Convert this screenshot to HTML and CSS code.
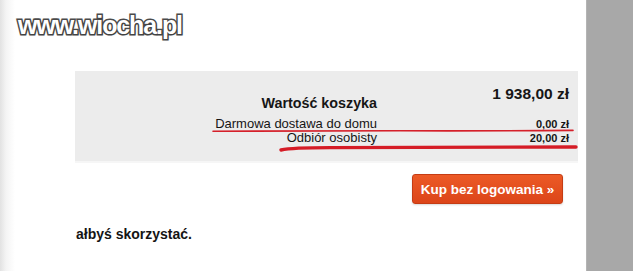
FILE: index.html
```html
<!DOCTYPE html>
<html lang="pl">
<head>
<meta charset="utf-8">
<title>Koszyk</title>
<link rel="stylesheet" href="styles.css">
</head>
<body>
<div class="main">
  <div class="logo"><span class="logo-text">www.wiocha.pl</span></div>
  <div class="panel">
    <div class="row-total">
      <span class="label label-total">Wartość koszyka</span>
      <span class="value value-total">1 938,00 zł</span>
    </div>
    <div class="row">
      <span class="label">Darmowa dostawa do domu</span>
      <span class="value">0,00 zł</span>
    </div>
    <div class="row">
      <span class="label">Odbiór osobisty</span>
      <span class="value">20,00 zł</span>
    </div>
  </div>
  <div class="actions">
    <button class="buy">Kup bez logowania »</button>
  </div>
  <p class="note">ałbyś skorzystać.</p>
  <svg class="marks" width="586" height="271" viewBox="0 0 586 271" aria-hidden="true">
    <path d="M213 131.2 Q 300 130.6 400 130.8 T 573 130.4" fill="none" stroke="#d5202a" stroke-width="1.6" stroke-linecap="round"/>
    <path d="M281 150 Q 292 147.6 330 147.6 L 576 147" fill="none" stroke="#d51c26" stroke-width="3.4" stroke-linecap="round"/>
  </svg>
</div>
<div class="sidebar"></div>
</body>
</html>
```
FILE: styles.css
```css
html, body {
  margin: 0;
  padding: 0;
}
body {
  width: 633px;
  height: 271px;
  overflow: hidden;
  background: #fff;
  font-family: "Liberation Sans", Arial, sans-serif;
  display: grid;
  grid-template-columns: 586px 47px;
}
.main {
  position: relative;
  background: linear-gradient(to right, #e2e2e2 0, #f4f4f4 6px, #fff 15px);
  height: 271px;
}
.sidebar {
  background: #a8a8a8;
  border-left: 1px solid #b4b4b4;
}
.logo {
  height: 71px;
  box-sizing: border-box;
  padding: 12px 0 0 18px;
  line-height: 26px;
}
.logo-text {
  font-family: "Liberation Sans", Arial, sans-serif;
  font-weight: bold;
  font-size: 25px;
  letter-spacing: -1.1px;
  color: #fff;
  -webkit-text-stroke: 3px #4b4b4b;
  paint-order: stroke fill;
  text-shadow: 1px 1px 2px rgba(0,0,0,0.18);
}
.panel {
  margin-left: 75px;
  width: 503px;
  height: 90px;
  background: #ececec;
  border-bottom: 2px solid #f6f6f6;
  box-sizing: content-box;
  color: #161616;
}
.row-total {
  display: grid;
  grid-template-columns: 302px 1fr;
  height: 46px;
  padding-right: 9px;
}
.row {
  display: grid;
  grid-template-columns: 302px 1fr;
  align-items: baseline;
  line-height: 14px;
  padding-right: 9px;
}
.label {
  text-align: right;
  font-size: 13px;
}
.value {
  text-align: right;
  font-size: 11px;
  font-weight: bold;
}
.label-total {
  align-self: end;
  font-size: 14.3px;
  font-weight: bold;
  line-height: 16px;
  margin-bottom: 6px;
}
.value-total {
  align-self: start;
  font-size: 15.5px;
  line-height: 18px;
  margin-top: 14px;
}
.actions {
  display: flex;
  justify-content: flex-end;
  padding-right: 23px;
  margin-top: 11px;
}
.buy {
  width: 151px;
  height: 30px;
  border: 1px solid #c53c14;
  border-radius: 3px;
  background: linear-gradient(#ec5a26, #dc4519);
  color: #fff;
  font-family: "Liberation Sans", Arial, sans-serif;
  font-weight: bold;
  font-size: 13.5px;
  padding: 0;
  box-shadow: 0 1px 2px rgba(0,0,0,0.15);
}
.note {
  margin: 22px 0 0 76px;
  font-size: 14px;
  font-weight: bold;
  line-height: 16px;
  color: #141414;
}
.marks {
  position: absolute;
  left: 0;
  top: 0;
  pointer-events: none;
}
```
